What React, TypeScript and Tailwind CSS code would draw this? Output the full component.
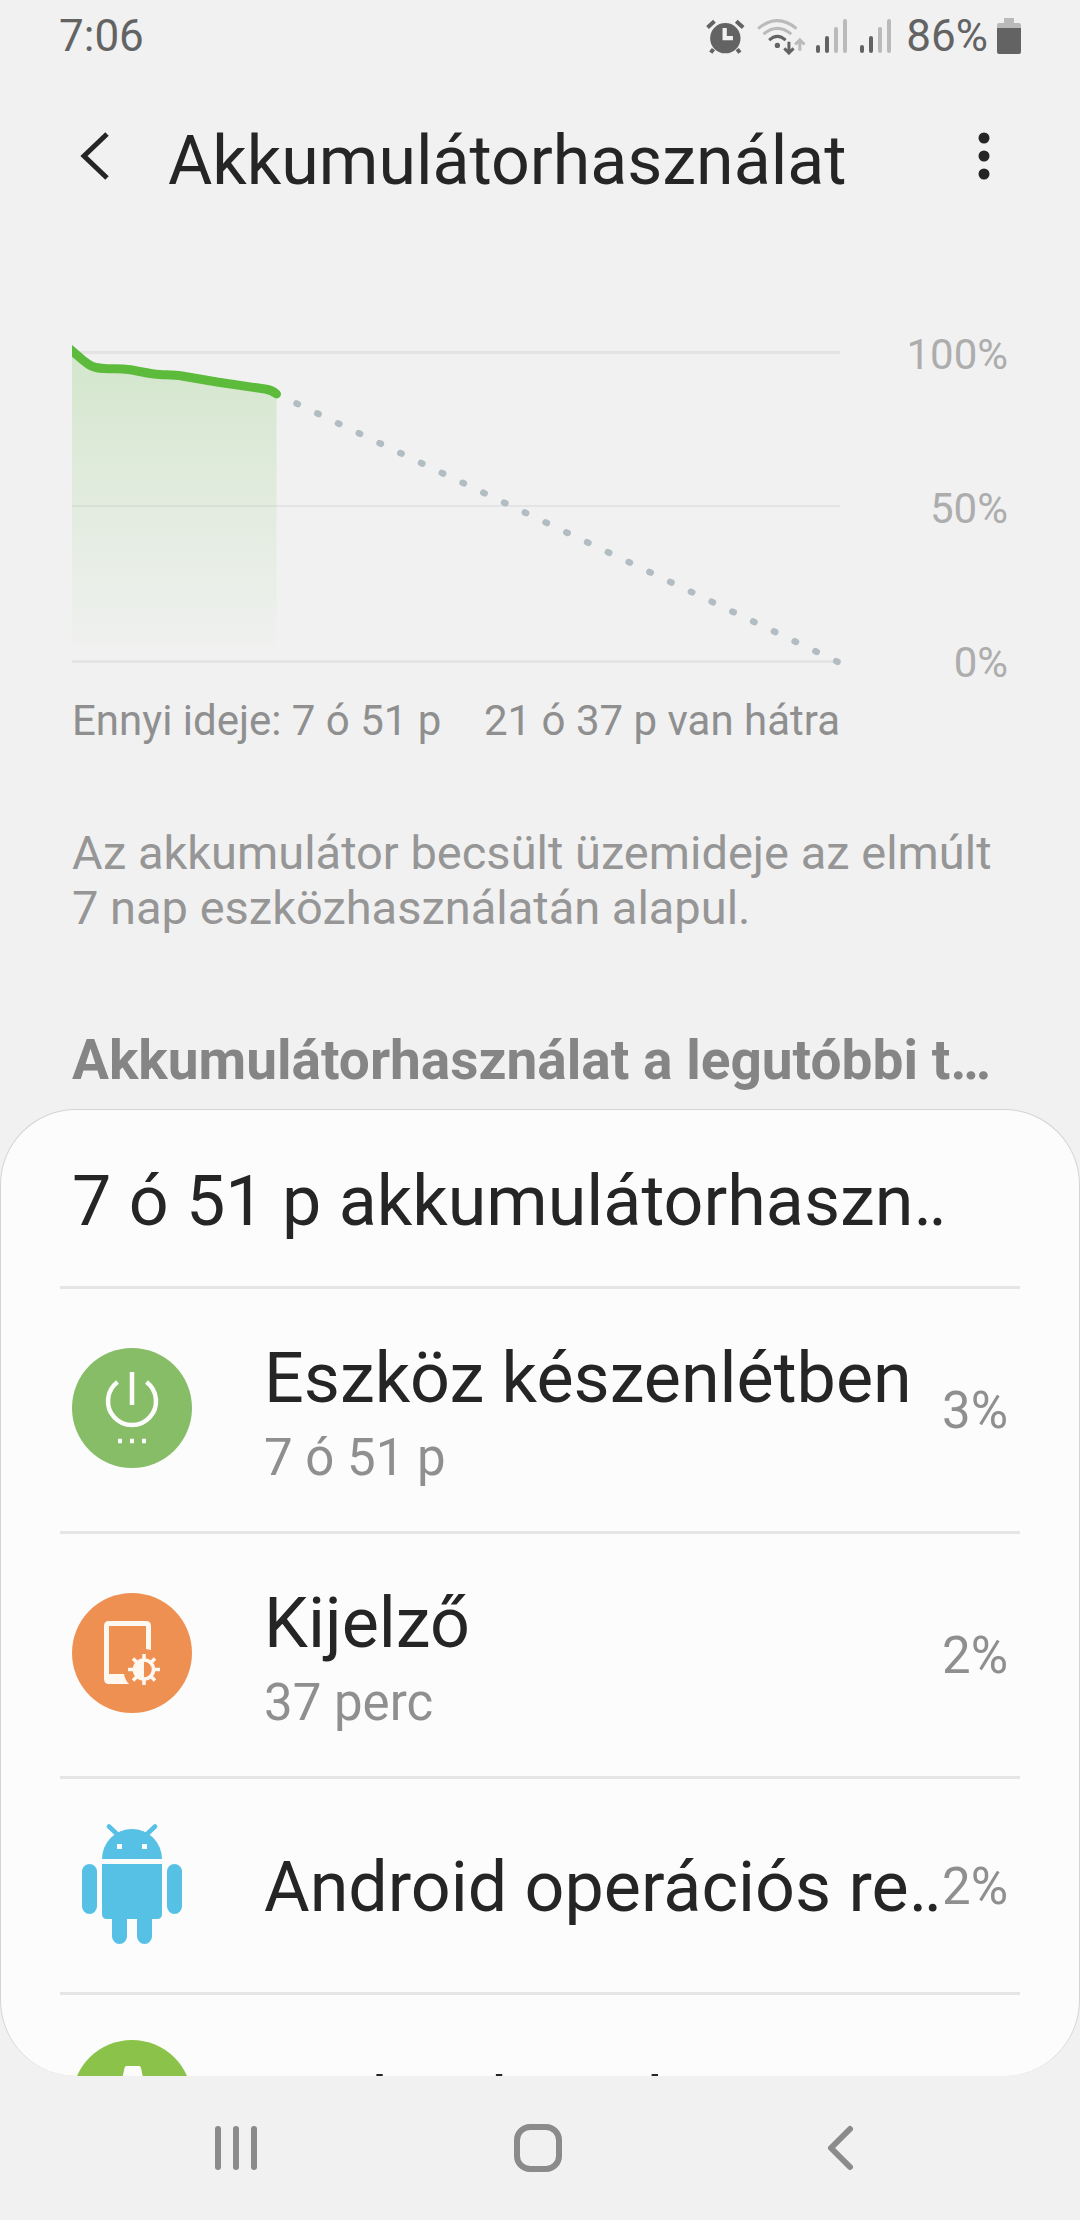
import type { ReactNode } from "react";

type Usage = { name: string; time?: string; percent?: string; icon: ReactNode };

const items: Usage[] = [
  { name: "Eszköz készenlétben", time: "7 ó 51 p", percent: "3%", icon: <StandbyIcon /> },
  { name: "Kijelző", time: "37 perc", percent: "2%", icon: <DisplayIcon /> },
  { name: "Android operációs re‥", percent: "2%", icon: <AndroidIcon /> },
  { name: "Android rendszer", icon: <SystemIcon /> },
];

export default function App() {
  return (
    <div className="flex h-screen flex-col overflow-hidden bg-[#f1f1f1] font-[Roboto,sans-serif] text-[#252525]">
      <StatusBar />
      <header className="flex h-[168px] shrink-0 items-center pl-[72px] pr-[60px]">
        <button aria-label="Vissza" className="flex h-20 w-[96px] items-center">
          <svg viewBox="0 0 44 50" className="h-[50px] w-[44px]" fill="none" stroke="#252525" strokeWidth="5">
            <path d="M35 3 L12 25 L35 47" />
          </svg>
        </button>
        <h1 className="flex-1 pt-[10px] text-[68px] leading-[80px]">Akkumulátorhasználat</h1>
        <button aria-label="További beállítások" className="flex h-20 w-[72px] items-center justify-center">
          <svg viewBox="0 0 12 50" className="h-[50px] w-3" fill="#252525">
            <circle cx="6" cy="7" r="5.5" />
            <circle cx="6" cy="25" r="5.5" />
            <circle cx="6" cy="43" r="5.5" />
          </svg>
        </button>
      </header>

      <section className="shrink-0 px-[72px] pt-[88px]">
        <div className="flex justify-between">
          <BatteryChart />
          <div className="-mb-[3px] mt-[3px] flex flex-col justify-between text-right text-[42px] leading-[48px] text-[#adadad]">
            <span>100%</span>
            <span>50%</span>
            <span>0%</span>
          </div>
        </div>
        <div className="mr-[168px] mt-[13px] flex justify-between whitespace-nowrap text-[42px] leading-[48px] text-[#8f8f8f]">
          <span>Ennyi ideje: 7 ó 51 p</span>
          <span>21 ó 37 p van hátra</span>
        </div>
        <p className="mt-20 text-[47px] leading-[55px] text-[#969696]">
          Az akkumulátor becsült üzemideje az elmúlt 7 nap eszközhasználatán alapul.
        </p>
        <h2 className="mt-[93px] whitespace-nowrap text-[55px] font-bold leading-[64px] text-[#858585]">
          Akkumulátorhasználat a legutóbbi t…
        </h2>
      </section>

      <main className="mt-[17px] min-h-0 flex-1 overflow-hidden rounded-[76px] border border-b-0 border-[#d4d4d4] bg-[#fcfcfc] px-[59px]">
        <h3 className="whitespace-nowrap px-3 pb-[45px] pt-[51px] text-[70px] leading-[80px]">7 ó 51 p akkumulátorhaszn‥</h3>
        <ul>
          {items.map(item => (
            <li key={item.name} className="border-t-[3px] border-[#e5e5e5]">
              <UsageRow item={item} />
            </li>
          ))}
        </ul>
      </main>

      <nav className="flex h-36 shrink-0 items-center justify-center pr-1">
        <button aria-label="Legutóbbiak" className="flex h-full w-[302px] items-center justify-center">
          <svg viewBox="0 0 42 48" className="h-12 w-[42px]" stroke="#8b8b8b" strokeWidth="6" strokeLinecap="round">
            <path d="M3 5V43M21 5V43M39 5V43" />
          </svg>
        </button>
        <button aria-label="Kezdőképernyő" className="flex h-full w-[302px] items-center justify-center">
          <svg viewBox="0 0 48 48" className="size-12" fill="none" stroke="#8b8b8b" strokeWidth="6">
            <rect x="3" y="3" width="42" height="42" rx="13" />
          </svg>
        </button>
        <button aria-label="Vissza" className="flex h-full w-[302px] items-center justify-center">
          <svg viewBox="0 0 28 48" className="h-12 w-7" fill="none" stroke="#8b8b8b" strokeWidth="6" strokeLinecap="round" strokeLinejoin="round">
            <path d="M24 5L5 24L24 43" />
          </svg>
        </button>
      </nav>
    </div>
  );
}

function UsageRow({ item }: { item: Usage }) {
  return (
    <a href="#" className={`flex items-start px-3 ${item.time ? "h-[242px] pt-[59px]" : "h-[213px] pt-[45px]"}`}>
      <div className="size-[120px] shrink-0">{item.icon}</div>
      <div className={`ml-[72px] flex min-w-0 flex-1 flex-col whitespace-nowrap ${item.time ? "-mt-[10px]" : "mt-[23px]"}`}>
        <span className="text-[70px] leading-[80px]">{item.name}</span>
        {item.time && <span className="text-[51px] leading-[80px] text-[#8f8f8f]">{item.time}</span>}
      </div>
      <span className="text-[51px] leading-[126px] text-[#8f8f8f]">{item.percent}</span>
    </a>
  );
}

function StatusBar() {
  return (
    <div className="flex h-[72px] shrink-0 items-center justify-between px-[59px] text-[44px] leading-[52px] text-[#636363]">
      <span>7:06</span>
      <div className="flex items-center">
        <svg viewBox="75 48 120 112" className="h-[37px] w-[40px]" fill="#636363">
          <circle cx="136" cy="109" r="46" />
          <path d="M82 77 L103 58 M190 77 L169 58" stroke="#636363" strokeWidth="12" fill="none" />
          <path d="M100 142 L92 153 M172 142 L180 153" stroke="#636363" strokeWidth="12" fill="none" />
          <path d="M134 78 V109 H159" stroke="#f1f1f1" strokeWidth="13" fill="none" />
        </svg>
        <svg viewBox="228 48 150 112" className="ml-[11px] h-[37px] w-[50px]" fill="none" strokeWidth="9">
          <path d="M234 80 Q292 32 350 80" stroke="#bababa" />
          <path d="M250 97 Q292 62 334 97" stroke="#bababa" />
          <path d="M267 115 Q292 92 317 115" stroke="#636363" />
          <circle cx="292" cy="131" r="8" fill="#636363" />
          <path d="M327 120 V154 M313 140 L327 154 L341 140" stroke="#636363" />
          <path d="M360 147 V115 M346 128 L360 114 L374 128" stroke="#bababa" />
        </svg>
        <SignalIcon />
        <SignalIcon />
        <span className="ml-3">86%</span>
        <svg viewBox="0 0 24 36" className="ml-[9px] h-9 w-6">
          <path d="M7 0H17V5H22Q24 5 24 7V10H0V7Q0 5 2 5H7Z" fill="#bababa" />
          <path d="M0 10H24V34Q24 36 22 36H2Q0 36 0 34Z" fill="#636363" />
        </svg>
      </div>
    </div>
  );
}

function SignalIcon() {
  return (
    <svg viewBox="0 0 32 36" className="ml-2 h-9 w-9" strokeWidth="4" strokeLinecap="round">
      <path d="M2 29V33M11 20V33" stroke="#636363" />
      <path d="M20 11V33M29 3V33" stroke="#bababa" />
    </svg>
  );
}

function BatteryChart() {
  return (
    <svg viewBox="0 0 772 356" className="h-[356px] w-[772px]" fill="none">
      <defs>
        <linearGradient id="level" x1="0" y1="0" x2="0" y2="1">
          <stop offset="0" stopColor="#5dbb3b" stopOpacity="0.2" />
          <stop offset="0.3" stopColor="#5dbb3b" stopOpacity="0.14" />
          <stop offset="1" stopColor="#5dbb3b" stopOpacity="0" />
        </linearGradient>
        <clipPath id="plot">
          <path d="M0 0H772V356H0Z" />
        </clipPath>
      </defs>
      <path d="M0 24.5H768M0 333.5H768" stroke="#e4e4e4" strokeWidth="3" />
      <path d="M0 178H768" stroke="#e4e4e4" strokeWidth="2" />
      <path d="M0 23C8 29 15 38 24 39.5C36 42 46 40 56 41.5C67 43 78 46 88 46.5C97 47 102 47 110 48L145 54L196 62Q201 63 204.5 66V333H0Z" fill="url(#level)" />
      <g clipPath="url(#plot)">
        <path d="M-4 19.5C6 27 15 38 24 39.5C36 42 46 40 56 41.5C67 43 78 46 88 46.5C97 47 102 47 110 48L145 54L193 61Q200 62 204.5 66" stroke="#5dbb3b" strokeWidth="9" strokeLinecap="round" />
      </g>
      <path d="M224.5 75.5L766 334" stroke="#b1bdc2" strokeWidth="6.5" strokeLinecap="round" strokeDasharray="1.5 21.5" />
    </svg>
  );
}

function StandbyIcon() {
  return (
    <svg viewBox="0 0 120 120" fill="none" stroke="#fcfcfc" strokeWidth="4.5">
      <circle cx="60" cy="60" r="60" fill="#88bd68" stroke="none" />
      <path d="M60 24V57M45.5 34A24 24 0 1 0 74.5 34" />
      <path d="M46 93H50M58 93H62M70 93H74" />
    </svg>
  );
}

function DisplayIcon() {
  return (
    <svg viewBox="0 0 120 120" fill="none" stroke="#fff8f0">
      <circle cx="60" cy="60" r="60" fill="#ef9053" stroke="none" />
      <path d="M32 33Q32 28 37 28H74Q79 28 79 33V57L74 56V33H37V81H52Q53 87 57 91H37Q32 91 32 86Z" fill="#fff8f0" stroke="none" />
      <circle cx="72" cy="76.5" r="9.5" strokeWidth="3.5" />
      <path d="M72 66A10 10 0 0 0 72 87Z" fill="#fff8f0" stroke="none" />
      <path
        d="M72 61V66M72 87V92M56 76.5H61M83 76.5H88M61 65.5L64.5 69M83 65.5L79.5 69M61 87.5L64.5 84M83 87.5L79.5 84"
        strokeWidth="3.5"
      />
    </svg>
  );
}

function AndroidIcon() {
  return (
    <svg viewBox="0 0 120 120" fill="#57c1e5">
      <path d="M30 35A30 30 0 0 1 90 35Z" />
      <path d="M37 2.5L46 11M83 2.5L74 11" stroke="#57c1e5" strokeWidth="4.5" strokeLinecap="round" />
      <path d="M30 40H90V90Q90 95 85 95H80V112.5A7.5 7.5 0 0 1 65 112.5V95H55V112.5A7.5 7.5 0 0 1 40 112.5V95H35Q30 95 30 90Z" />
      <rect x="10" y="40" width="15" height="50" rx="7.5" />
      <rect x="95" y="40" width="15" height="50" rx="7.5" />
      <path d="M45 20H50V25H45ZM70 20H75V25H70Z" fill="#fcfcfc" />
    </svg>
  );
}

function SystemIcon() {
  return (
    <svg viewBox="0 0 120 120">
      <circle cx="60" cy="60" r="60" fill="#8bc34a" />
      <path d="M54.5 26H67Q68.5 26 69 28L78 70H43.5L52.5 28Q53 26 54.5 26Z" fill="#fcfcfc" />
    </svg>
  );
}
